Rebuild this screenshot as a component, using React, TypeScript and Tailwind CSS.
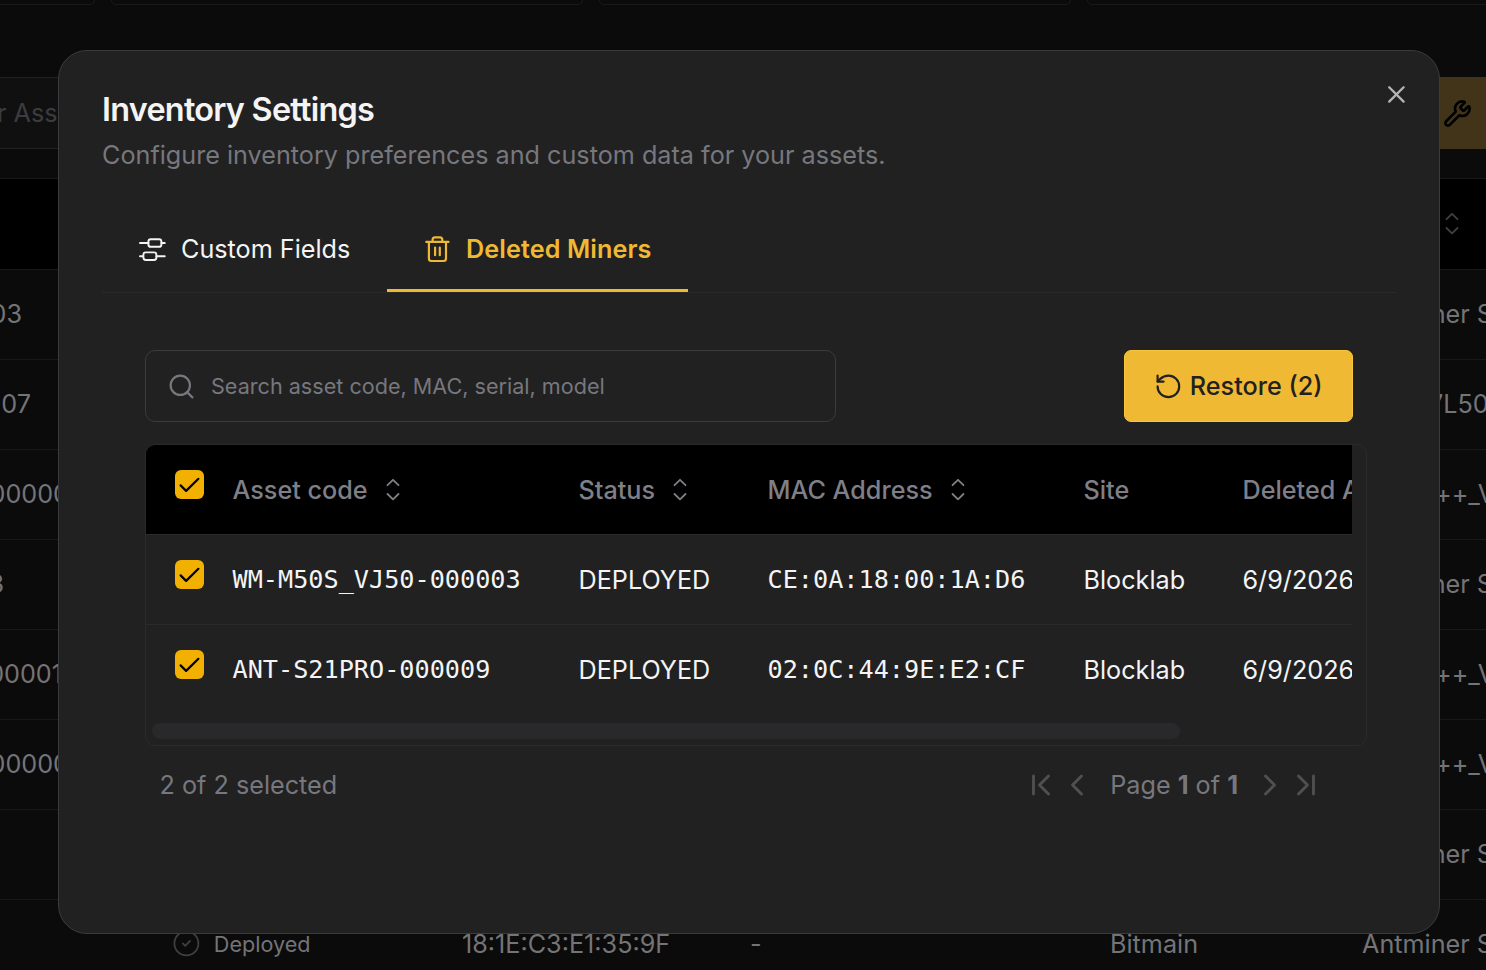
import { ReactNode } from 'react'
import {
  ChevronFirst,
  ChevronLast,
  ChevronLeft,
  ChevronRight,
  CircleCheck,
  RotateCcw,
  Search,
  Wrench,
  X,
} from 'lucide-react'

type Miner = {
  assetCode: string
  status: string
  mac: string
  site: string
  deletedAt: string
}

const miners: Miner[] = [
  {
    assetCode: 'WM-M50S_VJ50-000003',
    status: 'DEPLOYED',
    mac: 'CE:0A:18:00:1A:D6',
    site: 'Blocklab',
    deletedAt: '6/9/2026',
  },
  {
    assetCode: 'ANT-S21PRO-000009',
    status: 'DEPLOYED',
    mac: '02:0C:44:9E:E2:CF',
    site: 'Blocklab',
    deletedAt: '6/9/2026',
  },
]

const inventoryRows = [
  { code: '03', codeClass: 'w-[22px]', model: 'Antminer S', modelClass: 'w-[124px]' },
  { code: '-07', codeClass: 'w-[31px]', model: '7L50', modelClass: 'w-[57px]' },
  { code: '00000', codeClass: 'w-[69px]', model: '++_V', modelClass: 'w-[51px]' },
  { code: '3', codeClass: 'w-[4px]', model: 'Antminer S', modelClass: 'w-[124px]' },
  { code: '00001', codeClass: 'w-[62px]', model: '++_V', modelClass: 'w-[51px]' },
  { code: '00000', codeClass: 'w-[69px]', model: '++_V', modelClass: 'w-[51px]' },
  { code: '', codeClass: 'w-[22px]', model: 'Antminer S', modelClass: 'w-[124px]' },
]

const tableGrid =
  'grid w-[1400px] grid-cols-[57.5px_346px_189px_316px_159px_1fr] items-center pl-[29px]'

function SlidersIcon() {
  return (
    <svg width="28" height="28" viewBox="0 0 28 28" fill="none" stroke="currentColor" strokeWidth="1.9" strokeLinecap="round">
      <path d="M2 7h8.4M23.4 7h3.4" />
      <rect x="10.4" y="3.2" width="13" height="7.6" rx="2.4" />
      <path d="M2 20.2h3.2M18.4 20.2h8.4" />
      <rect x="5.4" y="16.4" width="13" height="7.6" rx="2.4" />
    </svg>
  )
}

function TrashIcon() {
  return (
    <svg width="28" height="28" viewBox="0 0 28 28" fill="none" stroke="currentColor" strokeWidth="2.2" strokeLinecap="round" strokeLinejoin="round">
      <path d="M3.3 6.9h22.2" />
      <path d="M9.6 6.5V4.7a2.4 2.4 0 0 1 2.4-2.4h4.9a2.4 2.4 0 0 1 2.4 2.4v1.8" />
      <path d="M5.9 7v16.6A2.4 2.4 0 0 0 8.3 26h12.3a2.4 2.4 0 0 0 2.4-2.4V7" />
      <path d="M12.1 12.6v7.6M16.8 12.6v7.6" />
    </svg>
  )
}

function SortIcon() {
  return (
    <svg width="28" height="29" viewBox="0 0 28 29" fill="none" stroke="currentColor" strokeWidth="1.8" strokeLinecap="round" strokeLinejoin="round">
      <path d="M8.5 10.2l5.5-5.4 5.5 5.4M8.5 19l5.5 5.4 5.5-5.4" />
    </svg>
  )
}

function Checkbox() {
  return (
    <span className="mb-[10px] flex size-[29px] items-center justify-center rounded-[6px] bg-[#f2b100] text-black">
      <svg width="29" height="29" viewBox="0 0 29 29" fill="none" stroke="currentColor" strokeWidth="2.2" strokeLinecap="round" strokeLinejoin="round">
        <path d="M5.6 15.4l5.5 5.5L23.4 8.8" />
      </svg>
    </span>
  )
}

function HeaderCell({ children, sortable }: { children: ReactNode; sortable?: boolean }) {
  return (
    <div className="flex items-center gap-[11px] pt-px whitespace-nowrap">
      <span className="pt-px">{children}</span>
      {sortable && <SortIcon />}
    </div>
  )
}

function InventoryPage() {
  return (
    <div className="flex h-full flex-col bg-[#0b0b0b] text-[#747477]">
      {/* Stat cards */}
      <div className="-ml-4 flex h-[5px] shrink-0 gap-4">
        <div className="w-[111px] shrink-0 rounded-b-[8px] border border-t-0 border-[#1a1a1a]" />
        <div className="w-[472px] shrink-0 rounded-b-[8px] border border-t-0 border-[#1a1a1a]" />
        <div className="w-[472px] shrink-0 rounded-b-[8px] border border-t-0 border-[#1a1a1a]" />
        <div className="w-[472px] shrink-0 rounded-b-[8px] border border-t-0 border-[#1a1a1a]" />
      </div>

      {/* Toolbar */}
      <div className="mt-[72px] flex h-[72px] shrink-0 justify-between">
        <div className="flex w-[400px] items-center border-y border-[#212122] bg-[#101010] text-[#3c3c40]">
          <span className="-ml-[3px] pt-[2px] whitespace-nowrap">r Asset</span>
        </div>
        <div className="flex w-[60px] items-center bg-[#423418] pl-[17px] text-black">
          <Wrench size={29} strokeWidth={2.2} />
        </div>
      </div>

      {/* Table */}
      <div className="mt-[29px] flex h-[92px] shrink-0 items-center justify-end border-y border-[#1a1a1a] bg-black pr-[20px] pb-[2px] text-[#3f3f44]">
        <SortIcon />
      </div>
      {inventoryRows.map((row, i) => (
        <div key={i} className="flex h-[90px] shrink-0 items-center justify-between border-b border-[#181818] pt-px">
          <span className={`flex justify-end whitespace-nowrap ${row.codeClass}`}>{row.code}</span>
          <span className={`whitespace-nowrap ${row.modelClass}`}>{row.model}</span>
        </div>
      ))}
      <div className="flex h-[90px] shrink-0 items-center pl-[172px]">
        <div className="flex w-[290px] shrink-0 items-center gap-[13px] pb-[2px] text-[21.6px]">
          <CircleCheck size={28.8} strokeWidth={1.5} className="mb-[2px] text-[#3f3f44]" />
          Deployed
        </div>
        <span className="w-[288px] shrink-0">18:1E:C3:E1:35:9F</span>
        <span className="w-[360px] shrink-0">-</span>
        <span className="w-[252px] shrink-0">Bitmain</span>
        <span className="whitespace-nowrap">Antminer S</span>
      </div>
    </div>
  )
}

function DeletedMinersTable() {
  return (
    <div className="h-[302px] w-[1222px] overflow-hidden rounded-[10px] border border-[#2a2a2b]">
      <div className="w-[1206px] overflow-hidden">
        <div className={`${tableGrid} h-[90px] border-b border-[#2a2a2b] bg-black font-medium text-[#7f7f87]`}>
          <Checkbox />
          <HeaderCell sortable>Asset code</HeaderCell>
          <HeaderCell sortable>Status</HeaderCell>
          <HeaderCell sortable>MAC Address</HeaderCell>
          <HeaderCell>Site</HeaderCell>
          <HeaderCell>Deleted At</HeaderCell>
        </div>
        {miners.map((miner) => (
          <div
            key={miner.assetCode}
            className={`${tableGrid} h-[90px] border-b border-[#2a2a2b] text-[#f4f4f5] last:border-transparent`}
          >
            <Checkbox />
            <span className="font-['DejaVu_Sans_Mono',monospace]">{miner.assetCode}</span>
            <span className="pt-[2px]">{miner.status}</span>
            <span className="font-['DejaVu_Sans_Mono',monospace]">{miner.mac}</span>
            <span className="pt-[2px]">{miner.site}</span>
            <span className="pt-[2px]">{miner.deletedAt}</span>
          </div>
        ))}
      </div>
      <div className="mt-[8px] ml-[6px] h-4 w-[1028px] rounded-full bg-[#29292b]" />
    </div>
  )
}

function SettingsDialog() {
  return (
    <div className="absolute top-[50px] left-[58px] flex h-[884px] w-[1382px] flex-col rounded-[29px] border border-[#3b3b3f] bg-[#212121] px-[43px] pt-[38px]">
      <button className="absolute top-[29px] right-[28px] text-[#b5b5b6]" title="Close">
        <X size={28.8} strokeWidth={1.9} />
      </button>

      <h2 className="text-[32.4px] leading-[42px] font-semibold tracking-[-0.023em] text-[#f4f4f5]">
        Inventory Settings
      </h2>
      <p className="mt-[6px] leading-9 text-[#77777e]">
        Configure inventory preferences and custom data for your assets.
      </p>

      {/* Tabs */}
      <div className="mt-[33px] flex h-[87px] w-[1294px] border-b border-[#2a2a2b]">
        <button className="flex w-[285px] items-center gap-[15px] pl-[36px] pt-px text-[#f4f4f5]">
          <SlidersIcon />
          <span className="pt-px">Custom Fields</span>
        </button>
        <button className="flex w-[301px] items-center gap-[15px] border-b-3 border-[#f0b933] pl-[36px] pt-[3px] font-semibold tracking-[0.004em] text-[#f0b933]">
          <TrashIcon />
          <span className="pt-[2px]">Deleted Miners</span>
        </button>
      </div>

      <div className="ml-[43px] mt-[57px] flex w-[1208px] items-center justify-between">
        <div className="flex h-[72px] w-[691px] items-center gap-[15px] rounded-[10px] border border-[#3b3b3f] pl-[21px] text-[21.6px] text-[#77777e]">
          <Search size={29} strokeWidth={1.8} />
          <span className="pt-px">Search asset code, MAC, serial, model</span>
        </div>
        <button className="flex h-[72px] w-[229px] items-center gap-[7px] rounded-[7px] border border-[#f9c63f] bg-[#f0b933] pl-[29px] font-medium text-[#212121]">
          <RotateCcw size={28.8} strokeWidth={1.8} />
          <span className="pt-[2px]">Restore (2)</span>
        </button>
      </div>

      <div className="ml-[43px] mt-[22px]">
        <DeletedMinersTable />
      </div>

      {/* Pagination */}
      <div className="ml-[57.5px] mt-[21px] flex h-9 w-[1164.5px] items-center justify-between text-[#77777e]">
        <span className="pt-[2px]">2 of 2 selected</span>
        <div className="flex items-center">
          <div className="flex text-[#505052]">
            <ChevronFirst size={36} strokeWidth={1.9} />
            <ChevronLeft size={36} strokeWidth={1.9} />
          </div>
          <span className="mr-[14px] ml-[15px] pt-[2px] whitespace-nowrap">
            Page <b className="font-bold">1</b> of <b className="font-bold">1</b>
          </span>
          <div className="flex text-[#505052]">
            <ChevronRight size={36} strokeWidth={1.9} />
            <ChevronLast size={36} strokeWidth={1.9} />
          </div>
        </div>
      </div>
    </div>
  )
}

export default function App() {
  return (
    <div className="relative h-[970px] w-[1486px] overflow-hidden font-['Inter',sans-serif] text-[25.2px]">
      <InventoryPage />
      <SettingsDialog />
    </div>
  )
}
